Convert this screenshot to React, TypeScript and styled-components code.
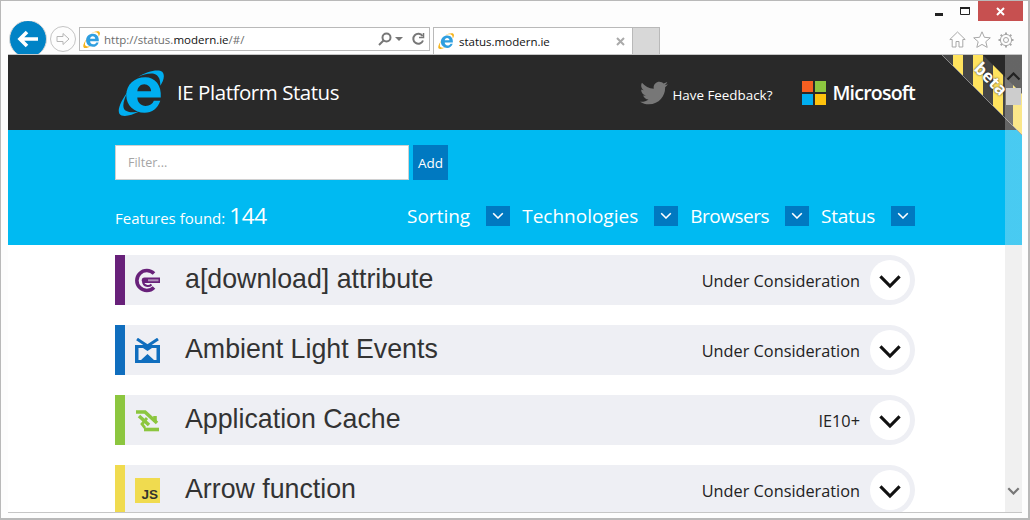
import React from "react";
import styled, { createGlobalStyle } from "styled-components";
import { FaTwitter } from "react-icons/fa";

const GlobalStyle = createGlobalStyle`
  html, body {
    margin: 0;
    padding: 0;
    background: #fdfdfd;
    overflow: hidden;
  }
  * {
    box-sizing: border-box;
  }
`;

const Win = styled.div`
  width: 1030px;
  height: 520px;
  display: flex;
  flex-direction: column;
  border: 1px solid #b9b9b9;
  border-width: 1px 2px 2px 1px;
  background: #fdfdfd;
  font-family: "Open Sans", "Liberation Sans", sans-serif;
  overflow: hidden;
`;

const TitleBar = styled.div`
  height: 20px;
  flex: none;
  display: flex;
  justify-content: flex-end;
  padding-right: 5px;
`;

const WinButton = styled.div`
  width: 26px;
  height: 20px;
  display: flex;
  align-items: center;
  justify-content: center;
`;

const MinButton = styled(WinButton)`
  padding-top: 6px;
`;

const CloseButton = styled(WinButton)`
  width: 45px;
  background: #c75050;
`;

const Toolbar = styled.div`
  height: 33px;
  flex: none;
  display: flex;
  align-items: flex-end;
  padding-left: 8px;
  overflow: hidden;
`;

const BackButton = styled.div`
  width: 38px;
  height: 38px;
  flex: none;
  margin-bottom: -4px;
  border-radius: 50%;
  background: #0083c6;
  border: 1px solid #d8d8d8;
  display: flex;
  align-items: center;
  justify-content: center;
`;

const ForwardButton = styled.div`
  width: 26px;
  height: 26px;
  flex: none;
  margin: 0 3px 2px 3px;
  border-radius: 50%;
  border: 1px solid #c4c4c4;
  display: flex;
  align-items: center;
  justify-content: center;
`;

const AddressBar = styled.div`
  width: 351px;
  height: 24px;
  flex: none;
  margin-bottom: 3px;
  background: #fff;
  border: 1px solid #b9b9b9;
  display: flex;
  align-items: center;
  padding: 0 4px 0 3px;
  font-size: 11.5px;
  color: #6d6d6d;
`;

const AddressText = styled.div`
  flex: 1;
  margin-left: 4px;
  b {
    font-weight: 400;
    color: #111;
  }
`;

const AddressTools = styled.div`
  display: flex;
  align-items: center;
  gap: 3px;
`;

const RefreshIcon = styled.svg`
  margin-left: 5px;
`;

const Tab = styled.div`
  width: 200px;
  height: 27px;
  flex: none;
  margin-left: 3px;
  background: #fff;
  border: 1px solid #b9b9b9;
  border-bottom: none;
  display: flex;
  align-items: center;
  padding: 0 7px 0 4px;
  font-size: 11.5px;
  color: #111;
`;

const TabTitle = styled.span`
  flex: 1;
  margin-left: 5px;
`;

const NewTab = styled.div`
  width: 27px;
  height: 27px;
  flex: none;
  background: #d8d8d8;
  border: 1px solid #b9b9b9;
  border-left: none;
  border-bottom: none;
`;

const ToolIcons = styled.div`
  margin-left: auto;
  margin-right: 14px;
  margin-bottom: 6px;
  display: flex;
  align-items: center;
  gap: 7px;
`;

const Viewport = styled.div`
  position: relative;
  height: 459px;
  flex: none;
  margin: 0 6px 0 7px;
  border-top: 1px solid #c6c6c6;
  border-bottom: 1px solid #c6c6c6;
  background: #fff;
  overflow: hidden;
`;

const Container = styled.div`
  width: 800px;
  margin: 0 auto;
`;

const TopBand = styled.header`
  height: 75px;
  background: #292929;
  color: #fff;
`;

const TopInner = styled(Container)`
  height: 100%;
  display: flex;
  align-items: center;
`;

const Brand = styled.div`
  display: flex;
  align-items: center;
  gap: 13px;
  margin-left: 3px;
`;

const BrandName = styled.span`
  font-size: 20.5px;
  letter-spacing: -0.45px;
  padding-bottom: 2px;
`;

const Feedback = styled.div`
  margin-left: auto;
  display: flex;
  align-items: center;
  gap: 4px;
  font-size: 13.4px;
  padding-top: 1px;
`;

const FeedbackText = styled.span`
  padding-top: 4px;
`;

const MsBrand = styled.div`
  margin-left: 30px;
  display: flex;
  align-items: center;
  gap: 6px;
  font-size: 19.5px;
  font-weight: 600;
  letter-spacing: -0.78px;
`;

const MsLogo = styled.div`
  width: 24px;
  height: 24px;
  display: grid;
  grid-template-columns: 11px 11px;
  grid-template-rows: 11px 11px;
  gap: 2px;
`;

const MsTile = styled.i<{ $color: string }>`
  display: block;
  background: ${(p) => p.$color};
`;

const BlueBand = styled.section`
  height: 115px;
  background: #00baf2;
  color: #fff;
`;

const BlueInner = styled(Container)`
  padding-top: 15px;
`;

const FilterRow = styled.div`
  display: flex;
  gap: 4px;
`;

const FilterInput = styled.input`
  width: 294px;
  height: 35px;
  padding: 0 12px;
  border: 1px solid #d0d0d0;
  background: #fff;
  font-family: inherit;
  font-size: 12.5px;
  outline: none;
  &::placeholder {
    color: #a5a5a5;
    opacity: 1;
  }
`;

const AddButton = styled.div`
  width: 35px;
  height: 35px;
  background: #0079c1;
  display: flex;
  align-items: center;
  justify-content: center;
  font-size: 13.5px;
`;

const FacetRow = styled.div`
  margin-top: 20px;
  display: flex;
  align-items: center;
`;

const Found = styled.div`
  font-size: 15px;
  display: flex;
  align-items: baseline;
  gap: 4px;
`;

const FoundCount = styled.span`
  font-size: 22.5px;
  letter-spacing: -0.3px;
`;

const Facets = styled.div`
  margin-left: auto;
  display: flex;
  align-items: center;
`;

const Facet = styled.div<{ $tracking: number }>`
  display: flex;
  align-items: center;
  gap: 16px;
  margin-left: 12px;
  font-size: 19px;
  line-height: 20px;
  letter-spacing: ${(p) => p.$tracking}px;
`;

const FacetToggle = styled.div`
  width: 24px;
  height: 20px;
  background: #0079c1;
  display: flex;
  align-items: center;
  justify-content: center;
`;

const List = styled(Container)`
  padding-top: 10px;
  display: flex;
  flex-direction: column;
  gap: 20px;
`;

const Row = styled.article<{ $accent: string }>`
  height: 50px;
  flex: none;
  display: flex;
  align-items: center;
  background: #eeeff4;
  border-left: 10px solid ${(p) => p.$accent};
  border-radius: 0 25px 25px 0;
  padding: 0 5px 0 10px;
`;

const RowIcon = styled.div`
  width: 25px;
  height: 25px;
  flex: none;
  display: flex;
`;

const RowTitle = styled.h2`
  margin: 0 0 1px 25px;
  flex: 1;
  font-family: "Liberation Sans", Arial, sans-serif;
  font-size: 26.75px;
  font-weight: 400;
  color: #333;
`;

const RowStatus = styled.span`
  margin: 2px 10px 0 0;
  font-size: 16.3px;
  color: #222;
`;

const RowToggle = styled.div`
  width: 40px;
  height: 40px;
  flex: none;
  padding-top: 3px;
  border-radius: 50%;
  background: #fff;
  display: flex;
  align-items: center;
  justify-content: center;
`;

const JsBadge = styled.div`
  width: 25px;
  height: 25px;
  background: #f0db4f;
  color: #323330;
  display: flex;
  align-items: flex-end;
  justify-content: flex-end;
  padding: 0 2px 1px 0;
  font-family: "Liberation Sans", Arial, sans-serif;
  font-size: 13.5px;
  line-height: 15px;
  font-weight: 700;
`;

const Ribbon = styled.div`
  position: absolute;
  top: 0;
  right: 0;
  width: 82px;
  height: 82px;
`;

const RibbonText = styled.span`
  position: absolute;
  top: 12px;
  left: 32px;
  transform: rotate(45deg);
  font-size: 17px;
  font-weight: 700;
  color: #fff;
  text-shadow: 0 0 2px #222;
`;

const Scrollbar = styled.div`
  position: absolute;
  top: 0;
  right: 0;
  bottom: 0;
  width: 17px;
  background: linear-gradient(
    to bottom,
    rgba(240, 240, 240, 0.3) 190px,
    #f0f0f0 190px
  );
  display: flex;
  flex-direction: column;
  align-items: center;
  padding: 17px 0 17px;
`;

const ScrollUp = styled.div`
  display: flex;
  transform: rotate(180deg);
`;

const ScrollThumb = styled.div`
  width: 15px;
  height: 17px;
  margin-top: 7px;
  background: #cdcdcd;
`;

const ScrollDown = styled.div`
  margin-top: auto;
  display: flex;
`;

const IeLogo = ({ size, color, ring }: { size: number; color: string; ring: string }) => (
  <svg width={size} height={size} viewBox="0 0 100 100">
    <path
      fill={color}
      fillRule="evenodd"
      d="M93 60H42C42 71 50 78 60 78C69 78 75 74 78 67H92C86 84 74 93 58 93C35 93 18 77 18 55C18 32 36 16 59 16C81 16 95 33 93 60ZM42 46H72C72 38 65 31 57 31C49 31 43 37 42 46Z"
    />
    <path fill={ring} d="M44 15C62 3 88-3 96 4C103 11 99 24 92 34C92 22 90 12 78 8C68 6 54 10 44 15Z" />
    <path fill={ring} d="M22 46C7 66-2 86 3 95C9 104 29 99 45 91C33 93 17 92 13 84C9 76 14 60 22 46Z" />
  </svg>
);

const Chevron = ({ size, color, weight }: { size: number; color: string; weight: number }) => (
  <svg width={size} height={size * 0.6} viewBox="0 0 20 12">
    <path d="M2 2L10 10L18 2" fill="none" stroke={color} strokeWidth={weight} />
  </svg>
);

const DownloadIcon = () => (
  <svg viewBox="0 0 25 25" width="25" height="25">
    <path d="M19 5.500A10 10 0 1 0 19 19.500" fill="none" stroke="#68217a" strokeWidth="3.600" />
    <path d="M8 14A5 5 0 0 0 16.500 16.500" fill="none" stroke="#68217a" strokeWidth="2" />
    <path d="M9.500 9.500H25V15H9.500A2.750 2.750 0 0 1 9.500 9.500Z" fill="#68217a" />
    <rect x="13" y="11.300" width="10.500" height="2" fill="#b08fb9" />
  </svg>
);

const LightIcon = () => (
  <svg viewBox="0 0 25 25" width="25" height="25">
    <path
      fill="#106ebe"
      fillRule="evenodd"
      d="M0 7H25V25H0ZM3.500 10H8L12.500 13L17 10H21.500V22H19L12.500 16L6 22H3.500Z"
    />
    <path d="M2 1L12.500 8L23 1" fill="none" stroke="#106ebe" strokeWidth="3" />
  </svg>
);

const CacheIcon = () => (
  <svg viewBox="0 0 25 25" width="25" height="25" fill="none" stroke="#8cc63f" strokeWidth="3.600">
    <path d="M1 4H10L22 15" />
    <path d="M4 8L14 17" />
    <path d="M9 21.500H24" />
    <path d="M20 8V14" />
    <path d="M12 10L7 16L10 20" strokeWidth="2.800" />
  </svg>
);

const rows = [
  { title: "a[download] attribute", status: "Under Consideration", accent: "#68217a", icon: <DownloadIcon /> },
  { title: "Ambient Light Events", status: "Under Consideration", accent: "#106ebe", icon: <LightIcon /> },
  { title: "Application Cache", status: "IE10+", accent: "#8cc63f", icon: <CacheIcon /> },
  { title: "Arrow function", status: "Under Consideration", accent: "#f0db4f", icon: <JsBadge>JS</JsBadge> },
];

const facets = [
  { label: "Sorting", tracking: 0 },
  { label: "Technologies", tracking: 0 },
  { label: "Browsers", tracking: -0.5 },
  { label: "Status", tracking: -0.2 },
];

const App: React.FC = () => {
  return (
    <>
      <GlobalStyle />
      <Win>
        <TitleBar>
          <MinButton>
            <svg width="8" height="3"><rect width="8" height="3" fill="#222" /></svg>
          </MinButton>
          <WinButton>
            <svg width="10" height="8"><path d="M.5 1H9.500V7.500H.5Z" fill="none" stroke="#222" /><rect width="10" height="2" fill="#222" /></svg>
          </WinButton>
          <CloseButton>
            <svg width="9" height="9"><path d="M1 1L8 8M8 1L1 8" stroke="#fff" strokeWidth="2" /></svg>
          </CloseButton>
        </TitleBar>
        <Toolbar>
          <BackButton>
            <svg width="22" height="18" viewBox="0 0 22 18">
              <path d="M10 2L3 9L10 16M3 9H21" fill="none" stroke="#fff" strokeWidth="3.600" />
            </svg>
          </BackButton>
          <ForwardButton>
            <svg width="16" height="14" viewBox="0 0 16 14">
              <path d="M8 1.500L14 7L8 12.500V9.500H2V4.500H8Z" fill="none" stroke="#b5b5b5" />
            </svg>
          </ForwardButton>
          <AddressBar>
            <IeLogo size={17} color="#2f9fe0" ring="#f5b31a" />
            <AddressText>
              http://status.<b>modern.ie</b>/#/
            </AddressText>
            <AddressTools>
              <svg width="14" height="14" viewBox="0 0 14 14" fill="none" stroke="#777" strokeWidth="2">
                <circle cx="8.500" cy="5.500" r="4" />
                <path d="M5.500 8.500L1 13" />
              </svg>
              <svg width="8" height="4"><path d="M0 0H8L4 4Z" fill="#777" /></svg>
              <RefreshIcon width="14" height="14" viewBox="0 0 14 14" fill="none" stroke="#777" strokeWidth="2">
                <path d="M11.500 4A5 5 0 1 0 12 8.500" />
                <path d="M12.500 1V5.500H8" strokeWidth="1.500" />
              </RefreshIcon>
            </AddressTools>
          </AddressBar>
          <Tab>
            <IeLogo size={16} color="#2f9fe0" ring="#f5b31a" />
            <TabTitle>status.modern.ie</TabTitle>
            <svg width="9" height="9"><path d="M1 1L8 8M8 1L1 8" stroke="#aaa" strokeWidth="2" /></svg>
          </Tab>
          <NewTab />
          <ToolIcons>
            <svg width="17" height="17" viewBox="0 0 17 17" fill="#fff" stroke="#a8a8a8">
              <path d="M.8 8.500L8.500 1L16.200 8.500H13.800V16H10V10.500H7V16H3.200V8.500Z" />
            </svg>
            <svg width="18" height="17" viewBox="0 0 18 17" fill="#fff" stroke="#a8a8a8">
              <path d="M9 .8L11.400 6.300L17.300 6.800L12.800 10.700L14.200 16.400L9 13.400L3.800 16.400L5.200 10.700L.7 6.800L6.600 6.300Z" />
            </svg>
            <svg width="16" height="16" viewBox="0 0 16 16" fill="none" stroke="#a8a8a8">
              <circle cx="8" cy="8" r="2.500" />
              <circle cx="8" cy="8" r="5.600" strokeWidth="1" />
              <path d="M8 .5V2.500M8 13.500V15.500M.5 8H2.500M13.500 8H15.500M2.700 2.700L4.100 4.100M11.900 11.900L13.300 13.300M13.300 2.700L11.900 4.100M4.100 11.900L2.700 13.300" strokeWidth="2" />
            </svg>
          </ToolIcons>
        </Toolbar>
        <Viewport>
          <TopBand>
            <TopInner>
              <Brand>
                <IeLogo size={46} color="#00aef0" ring="#00aef0" />
                <BrandName>IE Platform Status</BrandName>
              </Brand>
              <Feedback>
                <FaTwitter size={28} color="#777" />
                <FeedbackText>Have Feedback?</FeedbackText>
              </Feedback>
              <MsBrand>
                <MsLogo>
                  <MsTile $color="#f65f21" />
                  <MsTile $color="#8dc63f" />
                  <MsTile $color="#00aef0" />
                  <MsTile $color="#fec20d" />
                </MsLogo>
                Microsoft
              </MsBrand>
            </TopInner>
          </TopBand>
          <BlueBand>
            <BlueInner>
              <FilterRow>
                <FilterInput placeholder="Filter..." readOnly />
                <AddButton>Add</AddButton>
              </FilterRow>
              <FacetRow>
                <Found>
                  Features found: <FoundCount>144</FoundCount>
                </Found>
                <Facets>
                  {facets.map((f) => (
                    <Facet key={f.label} $tracking={f.tracking}>
                      {f.label}
                      <FacetToggle>
                        <Chevron size={12} color="#fff" weight={2.6} />
                      </FacetToggle>
                    </Facet>
                  ))}
                </Facets>
              </FacetRow>
            </BlueInner>
          </BlueBand>
          <List>
            {rows.map((r) => (
              <Row key={r.title} $accent={r.accent}>
                <RowIcon>{r.icon}</RowIcon>
                <RowTitle>{r.title}</RowTitle>
                <RowStatus>{r.status}</RowStatus>
                <RowToggle>
                  <Chevron size={24} color="#111" weight={2.6} />
                </RowToggle>
              </Row>
            ))}
          </List>
          <Ribbon>
            <svg width="82" height="82" viewBox="0 0 82 82">
              <defs>
                <clipPath id="ribbon-band">
                  <path d="M2 0H43L82 39V80Z" />
                </clipPath>
              </defs>
              <g clipPath="url(#ribbon-band)">
                <rect width="82" height="82" fill="#454545" />
                <rect x="13" width="10" height="82" fill="#ffe35e" />
                <rect x="33" width="10" height="82" fill="#ffe35e" />
                <rect x="53" width="10" height="82" fill="#ffe35e" />
                <rect x="73" width="9" height="82" fill="#ffe35e" />
              </g>
              <path d="M2 0L82 80" stroke="#8a8a8a" strokeWidth="1" />
            </svg>
            <RibbonText>beta</RibbonText>
          </Ribbon>
          <Scrollbar>
            <ScrollUp>
              <Chevron size={15} color="#222" weight={3} />
            </ScrollUp>
            <ScrollThumb />
            <ScrollDown>
              <Chevron size={13} color="#777" weight={3.4} />
            </ScrollDown>
          </Scrollbar>
        </Viewport>
      </Win>
    </>
  );
};

export default App;
